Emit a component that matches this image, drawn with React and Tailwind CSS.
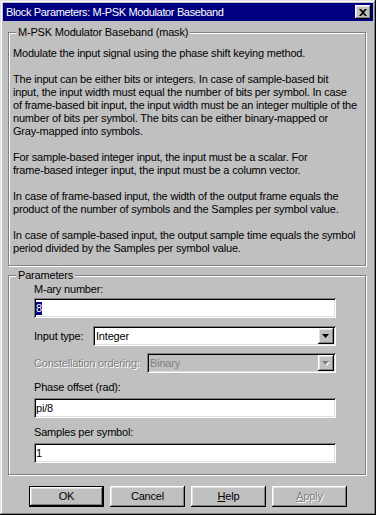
import React from 'react';

const raised = 'shadow-[inset_-1px_-1px_0_#000,inset_1px_1px_0_#fff,inset_-2px_-2px_0_#808080,inset_2px_2px_0_#dfdfdf]';
const sunken = 'shadow-[inset_1px_1px_0_#808080,inset_-1px_-1px_0_#fff,inset_2px_2px_0_#000,inset_-2px_-2px_0_#dfdfdf]';
const disabled = 'text-[#808080] [text-shadow:1px_1px_0_#fff]';

const paragraphs = [
  ['Modulate the input signal using the phase shift keying method.'],
  [
    'The input can be either bits or integers. In case of sample-based bit',
    'input, the input width must equal the number of bits per symbol. In case',
    'of frame-based bit input, the input width must be an integer multiple of the',
    'number of bits per symbol. The bits can be either binary-mapped or',
    'Gray-mapped into symbols.',
  ],
  [
    'For sample-based integer input, the input must be a scalar. For',
    'frame-based integer input, the input must be a column vector.',
  ],
  [
    'In case of frame-based input, the width of the output frame equals the',
    'product of the number of symbols and the Samples per symbol value.',
  ],
  [
    'In case of sample-based input, the output sample time equals the symbol',
    'period divided by the Samples per symbol value.',
  ],
];

const Group = ({ title, className, children }) => (
  <fieldset className={`border border-[#808080] shadow-[inset_1px_1px_0_#fff,1px_1px_0_#fff] px-0 ${className}`}>
    <legend className="ml-[7px] px-[2px] bg-[#c0c0c0] leading-[13px]">{title}</legend>
    {children}
  </fieldset>
);

const Arrow = ({ off }) => (
  <div className={`w-[16px] h-[16px] bg-[#c0c0c0] flex items-center justify-center ${raised}`}>
    <svg width="8" height="5" viewBox="0 0 8 5">
      {off && <path d="M1 1h7L4.5 5z" fill="#fff" />}
      <path d="M0 0h7L3.5 4z" fill={off ? '#808080' : '#000'} />
    </svg>
  </div>
);

const Field = ({ children }) => (
  <div className={`w-[302px] h-[20px] bg-white flex items-center pl-[2px] ${sunken}`}>{children}</div>
);

const Btn = ({ children, isDefault, off }) => (
  <div className={`w-[75px] h-[21px] flex items-center justify-center ${isDefault ? 'border border-black' : ''} ${off ? disabled : ''}`}>
    <div className={`w-full h-full flex items-center justify-center ${raised}`}>{children}</div>
  </div>
);

export default function App() {
  return (
    <div className="w-[376px] h-[515px] bg-[#c0c0c0] p-[3px] flex flex-col font-['Liberation_Sans',Arial,sans-serif] text-[11px] leading-[13px] tracking-[-0.19px] text-black shadow-[inset_-1px_-1px_0_#000,inset_1px_1px_0_#dfdfdf,inset_-2px_-2px_0_#808080,inset_2px_2px_0_#fff]">
      <div className="h-[18px] bg-[#000080] flex items-center pl-[3px] pr-[2px]">
        <span className="flex-1 text-white text-[11px] tracking-[-0.35px] whitespace-nowrap">Block Parameters: M-PSK Modulator Baseband</span>
        <div className={`w-[16px] h-[14px] bg-[#c0c0c0] flex items-center justify-center ${raised}`}>
          <svg width="8" height="7" viewBox="0 0 8 7">
            <path d="M0 0h2l2 2 2-2h2L5 3.5 8 7H6L4 5 2 7H0l3-3.5z" fill="#000" />
          </svg>
        </div>
      </div>

      <div className="pl-[5px] pr-[7px] flex flex-col">
        <Group title="M-PSK Modulator Baseband (mask)" className="mt-[5px]">
          <div className="pl-[4px] pt-[8px] pb-[10px]">
            {paragraphs.map((p, i) => (
              <div key={i} className={i > 0 ? 'mt-[13px]' : ''}>
                {p.map((line, j) => (
                  <div key={j} className="whitespace-nowrap">{line}</div>
                ))}
              </div>
            ))}
          </div>
        </Group>

        <Group title="Parameters" className="mt-[3px]">
          <div className="pl-[25px] pt-[1px] pb-[11px] flex flex-col">
            <div>M-ary number:</div>
            <div className="mt-[2px]">
              <Field><span className="bg-[#000080] text-white">8</span></Field>
            </div>

            <div className="mt-[8px] flex items-center">
              <span className="w-[59px]">Input type:</span>
              <div className={`w-[243px] h-[20px] bg-white flex items-center justify-between pl-[3px] pr-[2px] ${sunken}`}>
                <span>Integer</span>
                <Arrow />
              </div>
            </div>

            <div className="mt-[7px] flex items-center">
              <span className={`w-[113px] whitespace-nowrap ${disabled}`}>Constellation ordering:</span>
              <div className={`w-[189px] h-[20px] bg-[#c0c0c0] flex items-center justify-between pl-[3px] pr-[2px] ${sunken}`}>
                <span className="text-[#808080]">Binary</span>
                <Arrow off />
              </div>
            </div>

            <div className="mt-[8px]">Phase offset (rad):</div>
            <div className="mt-[4px]">
              <Field>pi/8</Field>
            </div>

            <div className="mt-[8px]">Samples per symbol:</div>
            <div className="mt-[4px]">
              <Field>1</Field>
            </div>
          </div>
        </Group>

        <div className="mt-[11px] pl-[21px] flex gap-[6px]">
          <Btn isDefault>OK</Btn>
          <Btn>Cancel</Btn>
          <Btn><span><span className="underline">H</span>elp</span></Btn>
          <Btn off><span><span className="underline">A</span>pply</span></Btn>
        </div>
      </div>
    </div>
  );
}
